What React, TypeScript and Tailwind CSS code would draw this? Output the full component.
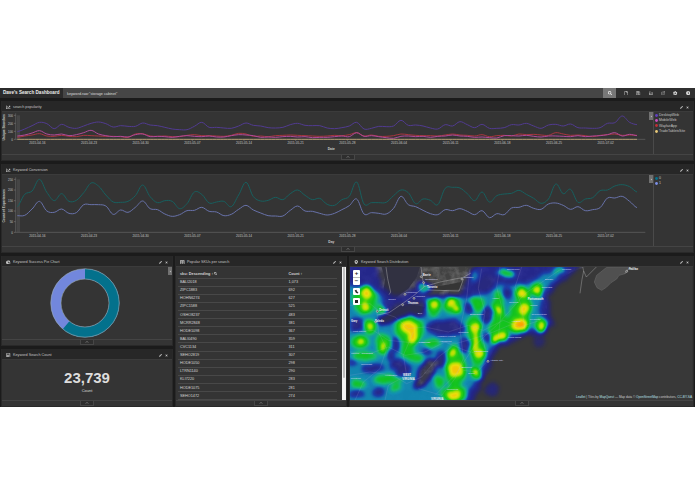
import type { ReactNode } from 'react';
import clsx from 'clsx';
import {
  FaCaretRight, FaChartLine, FaChartPie, FaClock, FaCog, FaMapMarkerAlt, FaPencilAlt,
  FaRegFile, FaRegFolderOpen, FaRegSave, FaSearch, FaTable, FaTimes, FaCalculator,
} from 'react-icons/fa';
import { FiExternalLink } from 'react-icons/fi';

const dates = [
  '2015-04-16', '2015-04-23', '2015-04-30', '2015-05-07', '2015-05-14', '2015-05-21',
  '2015-05-28', '2015-06-04', '2015-06-11', '2015-06-18', '2015-06-25', '2015-07-02',
];

// one y value per day, in chart units
const desktop = [
  143, 135, 125, 115, 119, 134, 121, 130, 133, 126, 118, 114, 119, 129, 125, 127, 127, 117, 123, 125, 130,
  135, 137, 137, 127, 115, 130, 130, 132, 133, 126, 117, 124, 126, 131, 132, 130, 122, 118, 124, 125, 125, 132,
  134, 131, 126, 115, 135, 133, 127, 128, 126, 109, 124, 123, 126, 132, 135, 122, 126, 113, 122, 131, 121, 133,
  133, 131, 122, 123, 118, 126, 133, 123, 121, 126, 120, 131, 132, 133, 131, 118, 116, 96, 115, 122,
];
const mobile = [
  156, 153, 147, 140, 150, 153, 150, 155, 152, 146, 139, 150, 155, 158, 157, 159, 152, 150, 158, 157, 158,
  160, 157, 155, 157, 158, 156, 159, 159, 155, 152, 153, 155, 160, 159, 160, 158, 157, 159, 158, 161, 160, 160,
  158, 156, 158, 146, 157, 155, 158, 161, 163, 157, 156, 158, 157, 160, 157, 156, 153, 156, 157, 160, 159, 161,
  162, 155, 155, 156, 154, 157, 159, 156, 156, 157, 158, 155, 158, 156, 155, 152, 146, 156, 151, 155,
];
const app = [
  160, 156, 153, 149, 156, 157, 154, 157, 158, 154, 155, 156, 157, 157, 158, 160, 150, 149, 156, 157, 156,
  158, 158, 154, 152, 155, 155, 156, 157, 154, 148, 150, 157, 156, 158, 155, 154, 153, 154, 155, 156, 157, 156,
  154, 155, 152, 146, 156, 153, 157, 157, 155, 150, 152, 154, 155, 155, 156, 153, 150, 153, 154, 156, 152, 158,
  155, 154, 156, 150, 152, 151, 153, 154, 146, 150, 154, 153, 155, 158, 154, 152, 150, 154, 153, 154,
];
const missed = [
  140, 103, 93, 58, 97, 122, 101, 124, 121, 98, 69, 78, 105, 126, 127, 124, 107, 75, 110, 128, 122, 124, 146,
  131, 96, 103, 129, 126, 124, 140, 105, 67, 110, 123, 121, 112, 119, 101, 90, 106, 119, 115, 133, 136, 119, 109,
  66, 132, 128, 128, 127, 107, 90, 98, 131, 117, 121, 134, 85, 82, 84, 101, 122, 96, 126, 107, 102, 100, 91, 103,
  115, 130, 117, 72, 101, 88, 127, 117, 113, 92, 90, 78, 74, 80, 96,
];
const converted = [
  167, 166, 147, 124, 153, 157, 147, 160, 158, 134, 134, 134, 138, 163, 150, 157, 142, 123, 146, 149, 162, 169,
  164, 152, 151, 142, 154, 156, 167, 163, 148, 136, 150, 159, 167, 168, 168, 151, 138, 153, 154, 160, 165, 160,
  149, 137, 117, 162, 158, 160, 162, 145, 109, 134, 140, 151, 161, 164, 149, 152, 146, 154, 164, 152, 173, 161,
  164, 144, 142, 136, 145, 148, 132, 129, 136, 148, 140, 152, 149, 143, 114, 114, 109, 124, 143,
];

const skus = [
  ['BALI2018', '1,073'], ['ZIPC1883', '692'], ['HOHN6274', '627'], ['ZIPC1588', '525'], ['OSHO8237', '483'],
  ['MCRR2848', '381'], ['HODE1098', '367'], ['BALI0490', '359'], ['CVC1134', '311'], ['SEHO2819', '307'],
  ['HODE1050', '298'], ['LTRN1140', '290'], ['KLI7220', '283'], ['HODE1075', '281'], ['SEHO1472', '274'],
];

function curve(values: number[]) {
  const pts = values.map((y, i) => [52 + i * 22.13, y]);
  let d = `M${pts[0][0]} ${pts[0][1]}`;
  for (let i = 0; i < pts.length - 1; i++) {
    const a = pts[Math.max(0, i - 1)];
    const b = pts[i];
    const c = pts[i + 1];
    const e = pts[Math.min(pts.length - 1, i + 2)];
    d += `C${b[0] + 8} ${b[1] + (c[1] - a[1]) / 6} ${c[0] - 8} ${c[1] - (e[1] - b[1]) / 6} ${c[0]} ${c[1]}`;
  }
  return d;
}

type PanelProps = { icon: ReactNode; title: string; className?: string; children: ReactNode };

function Panel({ icon, title, className, children }: PanelProps) {
  return (
    <section className={clsx('flex flex-col border border-t-0 border-[#292929] bg-[#343434]', className)}>
      <header className="flex h-[10px] shrink-0 items-center bg-[#272727] pl-[4px] pr-[4px] pt-[2px] text-[3.75px] leading-[6px] text-[#c4c4c4]">
        <span className="mr-[2px] flex w-[5px] text-[4.5px]">{icon}</span>
        <h2 className="grow">{title}</h2>
        <FaPencilAlt className="mr-[3px] size-[3px]" />
        <FaTimes className="size-[3px]" />
      </header>
      <div className="flex min-h-0 grow overflow-hidden border-t border-[#3b3b3b]">{children}</div>
      <footer className="flex h-[6px] shrink-0 justify-center border-t border-[#444]">
        <span className="flex h-[5px] w-[14px] items-center justify-center border-x border-b border-[#474747] bg-[#2e2e2e]">
          <svg viewBox="0 0 8 5" className="h-[2px] w-[4px]" fill="none" stroke="#aaa" strokeWidth="1.5"><path d="M1 4l3-3 3 3" /></svg>
        </span>
      </footer>
    </section>
  );
}

type ChartProps = {
  top: number; height: number; base: number; ticks: [string, number][];
  yLabel: string; xLabel: string; lines: [number[], string][];
};

function LineChart({ top, height, base, ticks, yLabel, xLabel, lines }: ChartProps) {
  return (
    <svg viewBox={`6 ${top} 1944 ${height}`} preserveAspectRatio="none" className="h-full w-[648px] shrink-0" fill="none">
      <rect x="50" y={ticks[0][1]} width="10" height={base - ticks[0][1]} fill="#454545" />
      <path d={`M47 ${ticks[0][1] - 6}V${base}H1936`} stroke="#666" strokeWidth="2" />
      {ticks.map(([t, y]) => (
        <g key={t}>
          <path d={`M42 ${y}h5`} stroke="#777" strokeWidth="2" />
          <text x="39" y={y + 3.5} textAnchor="end" fontSize="9" fill="#c4c4c4">{t}</text>
        </g>
      ))}
      {dates.map((d, i) => (
        <g key={d}>
          <path d={`M${112 + i * 155} ${base}v5`} stroke="#777" strokeWidth="2" />
          <text x={112 + i * 155} y={base + 15} textAnchor="middle" fontSize="9.5" fill="#c8c8c8">{d}</text>
        </g>
      ))}
      {lines.map(([v, color]) => <path key={color} d={curve(v)} stroke={color} strokeWidth="3" />)}
      <text x="994" y={base + 31} textAnchor="middle" fontSize="10" fontWeight="bold" fill="#ccc">{xLabel}</text>
      <text transform={`translate(16 ${(ticks[0][1] + base) / 2}) rotate(-90)`} textAnchor="middle" fontSize="9.8" fontWeight="bold" fill="#c4c4c4">{yLabel}</text>
    </svg>
  );
}

function Toggle() {
  return (
    <span className="flex h-[8px] w-[4px] shrink-0 items-center justify-center bg-[#707070]">
      <FaCaretRight className="size-[3px] text-[#ddd]" />
    </span>
  );
}

function Legend({ items }: { items: [string, string][] }) {
  return (
    <div className="-ml-px flex grow">
      <Toggle />
      <ul className="flex grow flex-col gap-[1.4px] border-l border-[#4a4a4a] pl-[1px] pt-[1px] text-[3.5px] leading-[4px] text-[#c4c4c4]">
        {items.map(([name, color]) => (
          <li key={name} className="flex items-center gap-[1px] whitespace-nowrap">
            <svg viewBox="0 0 3 3" className="size-[3px]"><circle cx="1.5" cy="1.5" r="1.4" fill={color} /></svg>
            {name}
          </li>
        ))}
      </ul>
    </div>
  );
}

// x, y, rx, ry
const warm = [
  [58, 145, 36, 42], [110, 175, 15, 17], [75, 225, 19, 24], [45, 270, 27, 20], [115, 275, 24, 33], [60, 312, 36, 11],
  [195, 232, 42, 42], [188, 295, 22, 27], [258, 275, 24, 13], [267, 164, 20, 30], [325, 158, 28, 24], [395, 155, 24, 24],
  [386, 230, 21, 43], [397, 300, 21, 42], [330, 345, 31, 66], [327, 425, 40, 22], [282, 390, 16, 16], [130, 382, 40, 12],
  [40, 395, 23, 11], [462, 155, 16, 42], [462, 225, 30, 43], [513, 200, 27, 47], [482, 65, 28, 10], [215, 320, 20, 11],
  [397, 365, 18, 18], [532, 180, 25, 62], [575, 112, 19, 20], [588, 218, 22, 21], [155, 405, 14, 9], [534, 122, 25, 16],
];
const hot = [
  [64, 125, 15, 17], [62, 165, 11, 14], [76, 224, 8, 10], [114, 285, 8, 14], [190, 222, 24, 18], [204, 254, 14, 26],
  [269, 157, 9, 13], [320, 152, 14, 13], [334, 170, 10, 10], [390, 229, 13, 13], [392, 267, 9, 30], [402, 306, 11, 13],
  [322, 302, 12, 13], [330, 352, 22, 24], [328, 428, 20, 12], [392, 363, 10, 10], [462, 257, 24, 14], [460, 177, 8, 18],
  [514, 219, 16, 19], [530, 127, 15, 12], [537, 172, 13, 19], [576, 112, 11, 11], [588, 219, 12, 12], [48, 269, 10, 9],
];
const cold = [
  [38, 217, 19, 20], [300, 227, 56, 24], [157, 335, 22, 16], [427, 187, 17, 28], [422, 97, 28, 28], [85, 350, 34, 12],
  [371, 167, 10, 18], [137, 310, 9, 16], [100, 422, 18, 10], [152, 275, 8, 24], [356, 282, 14, 22], [290, 322, 14, 24],
  [487, 122, 10, 16], [35, 425, 22, 10], [175, 355, 22, 18], [20, 330, 12, 8], [430, 255, 8, 14], [245, 300, 18, 7],
];
const cities: [number, number, string, boolean][] = [
  [233, 71, 'Barrie', true], [240, 84, 'Newmarket', false], [246, 108, 'Toronto', true], [356, 79, 'Kingston', false],
  [184, 124, 'Kitchener', false], [210, 136, 'Hamilton', false], [188, 155, 'Thomas', true], [130, 144, 'Sarnia', false],
  [103, 178, 'Detroit', true], [90, 211, 'Toledo', true], [18, 211, 'Gary', true], [218, 187, 'Erie', false],
  [275, 255, 'Allegheny Forest', false], [222, 273, 'Pittsburgh', false], [18, 306, 'Indiana · Columbus', false],
  [48, 340, 'Cincinnati', false], [17, 382, 'Louisville', false], [174, 373, 'WEST', true], [172, 384, 'VIRGINIA', true],
  [258, 443, 'VIRGINIA', true], [435, 328, 'Atlantic City', false], [375, 190, 'Binghamton', false], [440, 140, 'Albany', false],
  [350, 349, 'Baltimore', false], [370, 367, 'Dover', false], [388, 301, 'Philadelphia', false], [340, 243, 'Scranton', false],
  [284, 270, 'Harrisburg', false], [548, 143, 'Portsmouth', true], [556, 161, 'Salem', false], [560, 190, 'Provincetown', false],
  [555, 203, 'Plymouth', false], [600, 83, 'Bangor', false], [590, 107, 'Rockland', false], [852, 54, 'Halifax', true],
  [500, 210, 'Hartford', false], [490, 258, 'Long Island', false], [650, 53, 'Moncton', false], [25, 240, 'Fort Wayne', false],
  [120, 371, 'Huntington', false], [306, 415, 'Richmond', false], [485, 53, 'Sherbrooke', false], [492, 153, 'Concord', false],
];

function HeatMap() {
  const ellipse = ([x, y, rx, ry]: number[], fill: string) => (
    <ellipse key={`${x}-${y}`} cx={x} cy={y} rx={rx} ry={ry} fill={fill} />
  );
  return (
    <svg viewBox="15 45 1026 399" preserveAspectRatio="none" className="h-full w-full">
      <defs>
        <filter id="heat" filterUnits="userSpaceOnUse" x="-60" y="-20" width="1200" height="540" colorInterpolationFilters="sRGB">
          <feTurbulence type="fractalNoise" baseFrequency=".035" numOctaves="2" seed="7" result="noise" />
          <feDisplacementMap in="SourceGraphic" in2="noise" scale="20" xChannelSelector="R" yChannelSelector="G" />
          <feGaussianBlur stdDeviation="6.5" result="g" />
          <feComponentTransfer result="color">
            <feFuncR type="table" tableValues=".12 .12 .12 .09 .06 .08 .06 .22 .65 .92 1" />
            <feFuncG type="table" tableValues=".12 .12 .13 .25 .58 .76 .79 .84 .88 .87 .62" />
            <feFuncB type="table" tableValues=".5 .55 .6 .7 .72 .45 .12 .04 .02 .05 0" />
          </feComponentTransfer>
          <feColorMatrix in="g" values="0 0 0 0 0 0 0 0 0 0 0 0 0 0 0 1 0 0 0 0" />
          <feComponentTransfer result="mask">
            <feFuncA type="table" tableValues="0 .5 .82 .92 .95 .95 .95 .97 1 1 1" />
          </feComponentTransfer>
          <feComposite in="color" in2="mask" operator="in" />
        </filter>
        <filter id="terrain" x="0" y="0" width="100%" height="100%">
          <feTurbulence type="fractalNoise" baseFrequency=".035" numOctaves="4" seed="4" />
          <feColorMatrix values="0 0 0 0 .3 0 0 0 0 .3 0 0 0 0 .3 1.2 0 0 0 -.5" />
          <feComposite in2="SourceGraphic" operator="in" />
        </filter>
      </defs>
      <rect x="15" y="45" width="1026" height="400" fill="#383838" />
      <path d="M15 45H720L680 60 615 100 600 210 510 250 450 285 425 340 380 400 365 445H15Z" fill="#424242" />
      <path d="M15 45H720L680 60 615 100 600 210 510 250 450 285 425 340 380 400 365 445H15Z" fill="#777" filter="url(#terrain)" />
      <path d="M88 211L112 185 150 165 190 155 240 165 235 182 190 200 140 213 100 225Z M240 108L280 103 350 90 345 112 250 116Z M110 45H225L215 75 190 110 140 145 115 120 120 80Z" fill="#353535" />
      <path d="M785 46L755 70 748 90 756 107 770 115 784 106 798 92 815 81 822 70 840 65 855 45Z" fill="#505050" stroke="#636363" strokeWidth="2" />
      <g filter="url(#heat)">
        <rect x="-60" y="-20" width="1200" height="540" fill="#000" />
        <path d="M-20 20H90L98 75 130 120 225 108 250 100 240 130 345 127 375 65 400 20H720L690 62 640 98 610 130 616 190 625 218 605 245 570 250 550 243 512 264 455 292 436 340 412 390 379 460H-20Z" fill="#343434" />
        <path d="M-20 100L80 102 118 145 105 180 94 214 120 219 185 198 240 192 240 139 350 133 385 140 440 92 500 100 560 88 600 65 640 45 665 50 625 92 592 122 588 170 600 222 560 232 510 248 446 275 420 330 400 375 350 460 -20 460Z" fill="#636363" />
        <path d="M92 20H225L230 75 190 120 150 140 115 95Z" fill="#080808" />
        <path d="M94 212L117 184 150 164 205 146 240 154 240 186 190 196 125 218Z" fill="#111" />
        {warm.map((b) => ellipse(b, '#9b9b9b'))}
        {cold.map((b) => ellipse(b, '#2c2c2c'))}
        <path d="M210 402L222 352 250 322 275 320 286 337 258 372 240 404Z" fill="#080808" />
        {hot.map((b) => ellipse(b, '#efefef'))}
        <circle cx="529" cy="220" r="17" fill="#fff" />
        <ellipse cx="239" cy="108" rx="20" ry="15" fill="#7b7b7b" />
        <ellipse cx="442" cy="413" rx="20" ry="20" fill="#282828" />
        <ellipse cx="583" cy="269" rx="18" ry="18" fill="#202020" />
        <ellipse cx="645" cy="56" rx="20" ry="13" fill="#808080" />
        <ellipse cx="387" cy="72" rx="12" ry="20" fill="#606060" />
      </g>
      <g fill="none" stroke="#bcb2e5" strokeWidth="1.2" opacity=".38">
        <path d="M15 160l60-5 30 25 45 15 40 35 50-5 70 15 60-20 45 15 60-30 50 20 60-20" />
        <path d="M15 240l70-5 45 30 80 8 60-4 65 5 50-14 60-20 60-25" />
        <path d="M15 300l60 5 55-20 50 25 60-10 60-30 60 25 35 10" />
        <path d="M15 370l60-10 70 10 40 25 45-20 50-60 40-30" />
        <path d="M30 445l25-55 50-40 20-60-25-50-5-70M120 445l10-45 55-30-10-60 30-70M220 410l70 20 40-50 25-60-10-90 20-90 10-90" />
        <path d="M410 50l-10 60 20 70-10 60 10 50M465 45l-10 60 15 60-10 90M530 45l-20 60 20 60 10 70M355 355l40 5 35-35" />
        <path d="M270 430l60-60 60-90 70-65 80-90 110-75" />
      </g>
      <g fill="none" stroke="#b8b8b8" strokeWidth="1.7">
        <path d="M123 45l5 35 9 40-5 8M228 45l4 30 5 30-30 25-35 25-40 27-35 7M248 114l94 3 13-35M237 104l48-14 45-9 23-4 25-14" opacity=".75" />
        <path d="M705 124l6-42 5-25-3-12M716 57l8 18 30-30M840 65l15-20" opacity=".7" />
      </g>
      {[[229, 74], [351, 81], [180, 127], [207, 139], [173, 158], [97, 178], [92, 209], [429, 328], [236, 92], [845, 58]].map(([x, y]) => (
        <circle key={x} cx={x} cy={y} r="3" fill="#555" stroke="#ddd" strokeWidth="1.5" />
      ))}
      {cities.map(([x, y, name, bold]) => (
        <text key={`${x}-${y}`} x={x} y={y} fontSize={bold ? 8.4 : 7.5} fontWeight={bold ? 'bold' : 'normal'} fill={bold ? '#f4f4f4' : '#d6daf8'}>{name}</text>
      ))}
    </svg>
  );
}

export default function App() {
  return (
    <div className="h-[494px] w-[695px] overflow-hidden bg-white pt-[88px] font-['Liberation_Sans',Arial,sans-serif]">
      <main className="flex h-[319px] flex-col bg-[#1b1b1b]">
        <nav className="flex h-[10px] shrink-0 bg-[#303030]">
          <h1 className="flex w-[63px] items-center whitespace-nowrap bg-[#2b2b2b] pl-[3px] text-[4.6px] font-bold leading-[8px] text-[#eee]">Dave's Search Dashboard</h1>
          <div className="flex w-[540px] items-center bg-[#464646] pl-[4px] pt-[1px] text-[3.75px] leading-[6px] text-[#ddd]">keyword.raw:"storage cabinet"</div>
          <button className="flex w-[13px] items-center justify-center bg-[#777] text-white"><FaSearch className="size-[4px]" /></button>
          <div className="flex grow items-center justify-between pl-[8px] pr-[5px] text-[4.4px] text-[#d8d8d8]">
            <FaRegFile /><FaRegSave /><FaRegFolderOpen /><FiExternalLink /><FaCog /><FaClock />
          </div>
        </nav>
        <div className="flex grow flex-col gap-[3px] px-px pt-[3px]">
          <Panel icon={<FaChartLine />} title="search popularity" className="h-[60px]">
            <LineChart
              top={84} height={126} base={166} yLabel="Unique Searches" xLabel="Date"
              ticks={[['300', 94], ['200', 118], ['100', 142], ['0', 166]]}
              lines={[[desktop, '#513b91'], [app, '#a9363f'], [mobile, '#b04a9b'], [desktop.map(() => 166), '#b29b70']]}
            />
            <Legend items={[['DesktopWeb', '#6140c2'], ['MobileWeb', '#cc50c0'], ['WayfairApp', '#c22f35'], ['TradeTabletsSite', '#e8c979']]} />
          </Panel>
          <Panel icon={<FaChartLine />} title="Keyword Conversion" className="h-[89px]">
            <LineChart
              top={45} height={213} base={217} yLabel="Count of Experiences" xLabel="Day"
              ticks={[['250', 58], ['200', 90], ['150', 122], ['100', 153], ['50', 185], ['0', 217]]}
              lines={[[missed, '#17605f'], [converted, '#6872aa']]}
            />
            <Legend items={[['0', '#04728c'], ['1', '#7b8fe6']]} />
          </Panel>
          <div className="flex h-[151px] gap-[2px]">
            <div className="flex w-[172px] flex-col gap-[3px]">
              <Panel icon={<FaChartPie />} title="Keyword Success Pie Chart" className="h-[90px]">
                <div className="flex grow items-center justify-center">
                  <svg viewBox="-36 -36 72 72" className="size-[72px]" fill="none" strokeWidth="10.3">
                    <circle r="29.2" stroke="#7287dc" />
                    <circle r="29.2" stroke="#03718c" pathLength="360" strokeDasharray="220.5 360" transform="rotate(-90)" />
                    <circle r="34.2" stroke="#9aabb0" strokeWidth=".6" />
                    <circle r="24" stroke="#9aabb0" strokeWidth=".6" />
                  </svg>
                </div>
                <Toggle />
              </Panel>
              <Panel icon={<FaCalculator />} title="Keyword Search Count" className="h-[58px]">
                <div className="flex grow flex-col items-center justify-center pt-[3px] text-[#ddd]">
                  <strong className="text-[15px] leading-[16px]">23,739</strong>
                  <span className="mt-[2px] text-[4px] leading-[5px]">Count</span>
                </div>
              </Panel>
            </div>
            <Panel icon={<FaTable />} title="Popular SKUs per search" className="w-[172px]">
              <div className="grow pl-[2px] pr-[5px] pt-[3px]">
                <table className="w-full table-fixed border-collapse text-left text-[3.8px] leading-[4px] text-[#d4d4d4]">
                  <thead>
                    <tr className="h-[8.12px] border-b border-[#484848]">
                      <th className="w-[69.5%] p-0 pl-[2px]">sku: Descending <span className="font-normal">↕</span> <FaSearch className="inline size-[3px]" /></th>
                      <th className="p-0">Count <span className="font-normal">↕</span></th>
                    </tr>
                  </thead>
                  <tbody>
                    {skus.map(([sku, count]) => (
                      <tr key={sku} className="h-[8.12px] border-b border-[#484848]">
                        <td className="p-0 pl-[2px]">{sku}</td>
                        <td className="p-0">{count}</td>
                      </tr>
                    ))}
                  </tbody>
                </table>
              </div>
              <div className="w-[4px] shrink-0 bg-[#f4f4f4] px-[1px]"><div className="h-[111px] rounded-full bg-[#bdbdbd]" /></div>
            </Panel>
            <Panel icon={<FaMapMarkerAlt />} title="Keyword Search Distribution" className="w-[345px]">
              <div className="relative mr-[1px] grow">
                <HeatMap />
                <div className="absolute left-[3px] top-[3px] flex flex-col gap-[3px] text-[6px] font-bold leading-[7px] text-[#222]">
                  <div className="flex w-[7px] flex-col divide-y divide-[#bbb] rounded-[1px] bg-white text-center"><span>+</span><span>−</span></div>
                  <div className="flex size-[7px] items-center justify-center rounded-[1px] bg-white"><svg viewBox="0 0 8 8" className="size-[5px]"><path d="M1 2l3-1 1 3 2 1-1 2-3-1-1-2z" fill="#333" /></svg></div>
                  <div className="flex size-[7px] items-center justify-center rounded-[1px] bg-white"><span className="size-[3px] bg-[#222]" /></div>
                </div>
                <p className="absolute bottom-0 right-0 whitespace-nowrap text-[3.15px] leading-[6px] text-[#ccc]">
                  <b className="font-normal text-[#b9e0e8]">Leaflet</b> | Tiles by <b className="font-normal text-[#b9e0e8]">MapQuest</b> — Map data © <b className="font-normal text-[#b9e0e8]">OpenStreetMap</b> contributors, <b className="font-normal text-[#b9e0e8]">CC-BY-SA</b>
                </p>
              </div>
            </Panel>
          </div>
        </div>
      </main>
    </div>
  );
}
